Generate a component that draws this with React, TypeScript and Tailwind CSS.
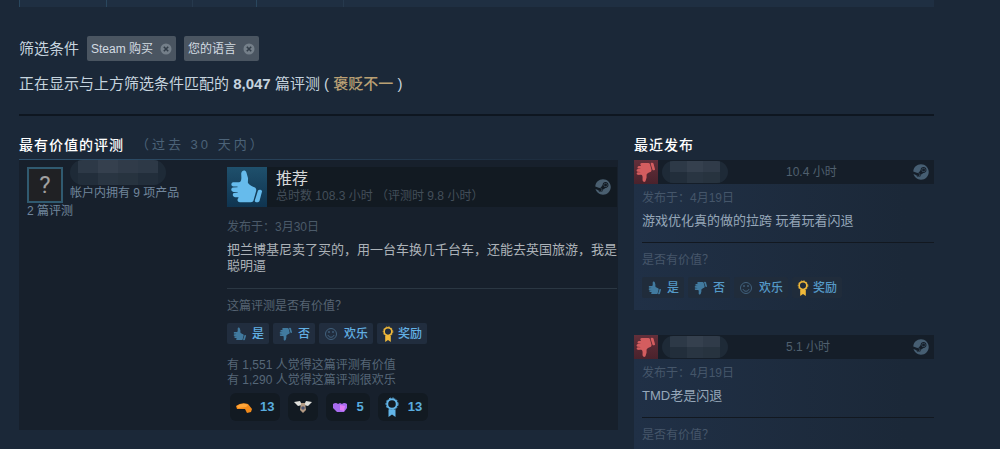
import { FaSteam } from "react-icons/fa";

const CJK = "font-['Liberation_Sans','Noto_Sans_CJK_SC',sans-serif]";

function Thumb({ down = false, className }: { down?: boolean; className: string }) {
  return (
    <svg viewBox="0 0 40 40" className={className} fill="currentColor" aria-hidden>
      <g transform={down ? "matrix(1 0 0 -1 0 40)" : undefined}>
        <path d="M13 15C15 13.500 14.200 9.500 14.200 6.500c.4-3.500 4.200-4 5.200-1L21 11c.2 2-.3 3.500 0 5 1.500 2.500 4.500 3.500 7 4.500 1.300 1 1.500 2.500 1 4l-2.500 9c-.4 1.200-1.300 1.700-2.500 1.700H13c-2.800-.2-3.200-3-1.500-4.200l-.1-.8H8c-2.600-.4-2.800-3.300-1.300-4.300l4-.3v-.7H6.500c-2.900-.4-2.900-3.900-.5-4.500l4.500-.2v-.7H6.500c-2.800-.4-2.800-3.500-.3-4.200C8.500 15 11 15.500 13 15Z" />
        <path d="M31 23.500c.8-1.300 4.300-.7 4 1L32.500 34c-.8 2-5 1.800-4.700-.5Z" />
      </g>
    </svg>
  );
}

function Ribbon({ className }: { className: string }) {
  return (
    <svg viewBox="0 0 14 20" className={className} aria-hidden>
      <circle cx="7" cy="7" r="4.800" fill="none" stroke="currentColor" strokeWidth="2" />
      <circle cx="7" cy="7" r="6" fill="none" stroke="currentColor" strokeWidth="1" strokeDasharray="2 1.500" />
      <path d="M3.500 12.500h7V20L7 17.500 3.500 20Z" fill="currentColor" />
    </svg>
  );
}

function Smile() {
  return (
    <svg viewBox="0 0 14 14" className="size-3.5 text-[#41617d]" fill="none" stroke="currentColor" aria-hidden>
      <circle cx="7" cy="7" r="5.500" />
      <path d="M4 8c.6 3 5.400 3 6 0" />
      <path d="M5 4v2M9 4v2" strokeWidth="1.300" />
    </svg>
  );
}

function Chip({ label }: { label: string }) {
  return (
    <button className="flex h-[25px] items-center gap-[7px] rounded-xs bg-[#4a5561] px-1 text-xs text-[#d3dbe2]">
      {label}
      <svg viewBox="0 0 12 12" className="size-3" aria-hidden>
        <circle cx="6" cy="6" r="5.500" fill="#747f89" />
        <path d="M3.800 3.800l4.400 4.400M8.200 3.800L3.800 8.200" stroke="#333e49" strokeWidth="1.600" />
      </svg>
    </button>
  );
}

function VoteButtons({ dim = false }: { dim?: boolean }) {
  const btn =
    "flex h-[21px] items-center gap-1 rounded-xs px-[5px] text-xs font-medium " +
    (dim ? "bg-[#202c3b] text-[#559ac8]" : "bg-[#212d3e] text-[#62b0e4]");
  return (
    <div className="flex gap-1">
      <button className={btn}>
        <Thumb className="size-4 text-[#417a9f]" />是
      </button>
      <button className={btn}>
        <Thumb down className="size-4 text-[#417a9f]" />否
      </button>
      <button className={btn}>
        <Smile />
        <span className="pl-0.5">欢乐</span>
      </button>
      <button className={btn}>
        <Ribbon className="h-4 w-3 text-[#f0b93a]" />
        <span>奖励</span>
      </button>
    </div>
  );
}

// pixelated strip that hides a user name
const tones = ["bg-[#222e3b]", "bg-[#2d3947]", "bg-[#27333f]", "bg-[#303b49]", "bg-[#293542]", "bg-[#35404e]"];

function HiddenName({ cells, className }: { cells: number; className: string }) {
  return (
    <div className={"overflow-hidden rounded-full bg-[#1e2a37] " + className} aria-hidden>
      <div className="mx-2 grid h-full grid-flow-col grid-rows-2">
        {Array.from({ length: cells * 2 }, (_, i) => (
          <span key={i} className={tones[(i * 5 + 1) % tones.length]} />
        ))}
      </div>
    </div>
  );
}

type RecentProps = { hours: string; date: string; text: string; canVote?: boolean };

function RecentReview({ hours, date, text, canVote = false }: RecentProps) {
  return (
    <article className="bg-linear-to-r from-[#203046] to-[#1b2838] to-90%">
      <header className="flex h-6 items-center bg-[#151e29]">
        <div className="size-6 bg-linear-to-b from-[#632f3a] to-[#4a222c]">
          <Thumb down className="size-6 text-[#d45d5f]" />
        </div>
        <HiddenName cells={3} className="ml-1 h-[22px] w-[66px]" />
        <span className="grow pl-[58px] text-xs text-[#50606f]">{hours}</span>
        <FaSteam className="mr-[5px] size-4 text-[#465e72]" />
      </header>
      <div className="pb-3 pl-2">
        <p className="pt-1.5 text-xs leading-4 text-[#45566a]">{date}</p>
        <p className="pt-[7px] text-[13px] leading-4 text-[#96a7b9]">{text}</p>
        <hr className="mt-[13px] border-[#121820]" />
        <p className="pt-[9px] pb-[9px] text-xs leading-4 text-[#46566a]">是否有价值？</p>
        {canVote && <VoteButtons dim />}
      </div>
    </article>
  );
}

const award = "flex h-7 items-center gap-2 rounded-md bg-[#121a22] px-1.5 text-[13px] font-bold text-[#59acdf]";

export default function App() {
  return (
    <div className={`h-screen overflow-hidden bg-[#1b2838] pr-[66px] pl-[19px] text-[#c6d4df] ${CJK}`}>
      {/* Bottom edge of the filter bar */}
      <div className="flex h-[7px] bg-[#1f2f42]">
        <div className="w-[88px] border-x border-[#2a475e]" />
        <div className="w-[86px] border-r border-[#26394d]" />
        <div className="w-16 border-r border-[#2a475e]" />
        <div className="w-[87px] border-r border-[#26394d]" />
      </div>

      {/* Active filters */}
      <div className="mt-[29px] flex items-center gap-2">
        <span className="text-[15px] leading-6">筛选条件</span>
        <Chip label="Steam 购买" />
        <Chip label="您的语言" />
      </div>
      <p className="mt-[11px] text-[15px] leading-6 whitespace-nowrap">
        正在显示与上方筛选条件匹配的 <b>8,047</b> 篇评测 ( <span className="font-medium text-[#b9a074]">褒贬不一</span> )
      </p>
      <hr className="mt-[18px] border-t-2 border-[#0e1620]" />

      <div className="mt-[17px] flex gap-4">
        {/* Most helpful */}
        <main className="min-w-0 grow">
          <h2 className="flex h-6 items-center gap-3 text-sm tracking-[1px] text-white">
            <span className="font-medium">最有价值的评测</span>
            <span className="text-[13px] tracking-[3px] text-[#4c6378]">（过去 30 天内）</span>
          </h2>
          <div className="mt-0.5 h-px bg-linear-to-r from-[#30536f] to-[#1b2838]" />
          <article className="flex bg-[#17202c] pb-[9px]">
            <div className="w-[208px] shrink-0 pl-2 text-xs leading-4 text-[#71869c]">
              <div className="flex gap-[7px]">
                <div className="mt-[7px] flex size-9 shrink-0 items-center justify-center border-2 border-[#305a70] bg-[#202124] font-['Roboto',sans-serif] text-2xl text-[#a0a0a0]">
                  ?
                </div>
                <div>
                  <HiddenName cells={4} className="h-[25px] w-24" />
                  <p>帐户内拥有 9 项产品</p>
                </div>
              </div>
              <p>2 篇评测</p>
            </div>

            <div className="min-w-0 grow pt-[7px] pr-px">
              <header className="flex h-10 items-center bg-[#121a22]">
                <div className="size-10 bg-linear-to-b from-[#1f506c] to-[#0f3450]">
                  <Thumb className="size-10 text-[#66bbec]" />
                </div>
                <div className="grow pl-[9px]">
                  <p className="text-base leading-4 text-[#d6d7d8]">推荐</p>
                  <p className="pt-px text-xs leading-4 text-[#434e59]">总时数 108.3 小时 （评测时 9.8 小时）</p>
                </div>
                <FaSteam className="mr-1.5 size-4 text-[#4a5f70]" />
              </header>
              <p className="pt-3 text-xs leading-4 text-[#4b5a69]">发布于：3月30日</p>
              <p className="pt-[7px] text-[13px] leading-4 text-[#acb2b8]">
                把兰博基尼卖了买的，用一台车换几千台车，还能去英国旅游，我是聪明逼
              </p>
              <hr className="mt-3.5 border-[#2b3743]" />
              <p className="pt-[9px] pb-[9px] text-xs leading-4 text-[#566473]">这篇评测是否有价值？</p>
              <VoteButtons />
              <p className="pt-3.5 text-xs leading-[15px] text-[#566778]">
                有 1,551 人觉得这篇评测有价值
                <br />有 1,290 人觉得这篇评测很欢乐
              </p>
              <div className="flex gap-2 pt-[5px] pl-[3px]">
                <button className={award}>
                  <svg viewBox="0 0 16 12" className="h-3 w-4" aria-hidden>
                    <path d="M0 5Q5 1 12 3l4 5-1 3-4 1-2-4-8 0Z" fill="#f28a1a" />
                    <path d="M1 5q6-4 11-1l-2 2-8 1Z" fill="#ffa63a" />
                  </svg>
                  13
                </button>
                <button className={award} aria-label="奖励">
                  <svg viewBox="0 0 18 14" className="h-3.5 w-[18px]" aria-hidden>
                    <path d="M0 2l6-1 2 4-4 1ZM18 2l-6-1-2 4 4 1Z" fill="#dfe0dc" />
                    <path d="M7 3h4l1 7-3 3-3-3Z" fill="#b39a83" />
                    <circle cx="9" cy="8" r="1.800" fill="#4c5572" />
                  </svg>
                </button>
                <button className={award}>
                  <svg viewBox="0 0 16 12" className="h-3 w-4" aria-hidden>
                    <path d="M1 3q3-2 5 0l2-1 2 1q2-2 5 0v4l-3 4-4 0-3 0-4-4Z" fill="#a96cf0" />
                    <path d="M8 4l5 1-1 5-4-1Z" fill="#e07cf5" />
                  </svg>
                  5
                </button>
                <button className={award}>
                  <Ribbon className="h-5 w-4 text-[#62b5e8]" />
                  13
                </button>
              </div>
            </div>
          </article>
        </main>

        {/* Recently posted */}
        <aside className="w-[300px] shrink-0">
          <h2 className="flex h-6 items-center text-sm font-medium tracking-[1px] text-white">最近发布</h2>
          <div className="flex flex-col gap-[25px] pt-[3px]">
            <RecentReview hours="10.4 小时" date="发布于：4月19日" text="游戏优化真的做的拉跨 玩着玩着闪退" canVote />
            <RecentReview hours="5.1 小时" date="发布于：4月19日" text="TMD老是闪退" />
          </div>
        </aside>
      </div>
    </div>
  );
}
